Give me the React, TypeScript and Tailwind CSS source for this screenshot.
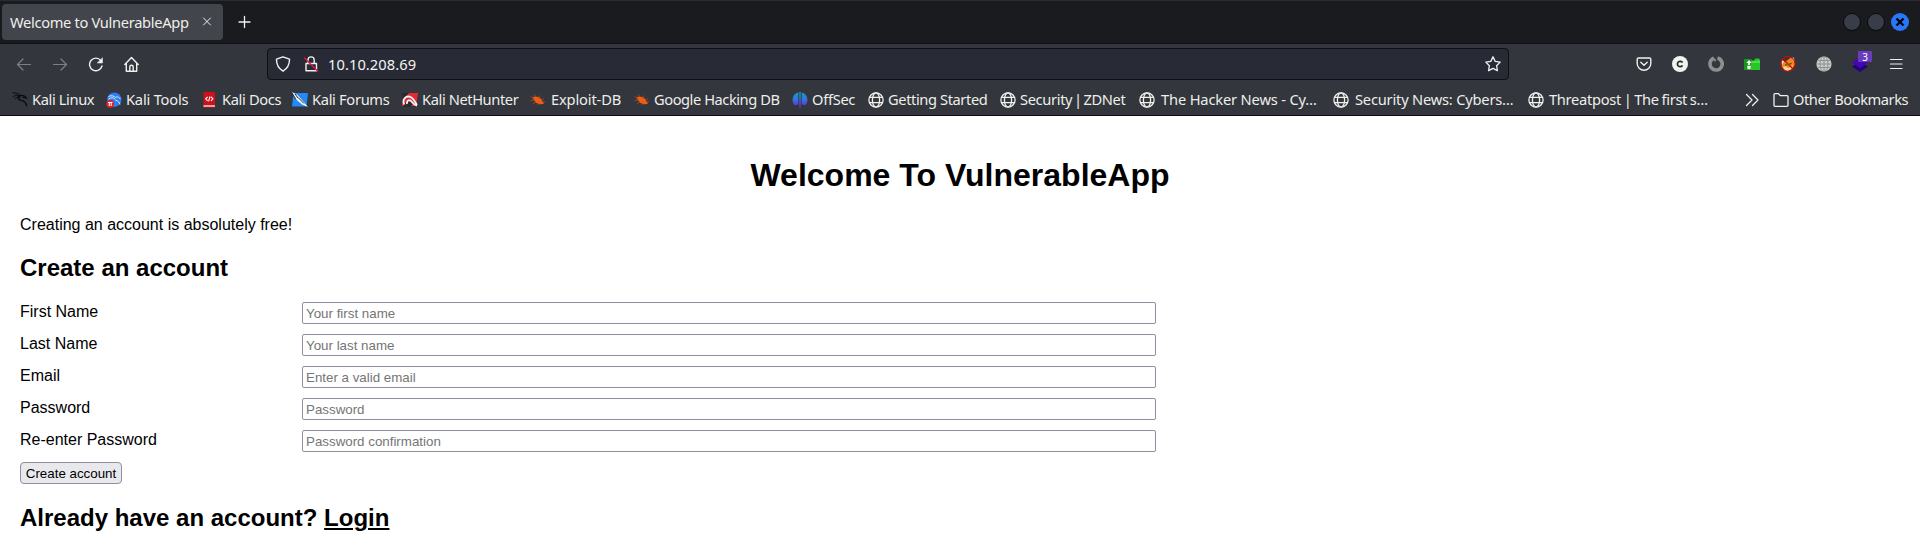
import React from "react";

type Kind =
  | "dragon" | "tools" | "docs" | "forums" | "nethunter" | "bug" | "offsec" | "globe";

const bookmarks: { label: string; kind: Kind; box: string; text: string }[] = [
  { label: "Kali Linux", kind: "dragon", box: "w-[94px]", text: "ml-1 tracking-[-0.38px]" },
  { label: "Kali Tools", kind: "tools", box: "w-[96px]", text: "ml-1 tracking-[-0.2px]" },
  { label: "Kali Docs", kind: "docs", box: "w-[90px]", text: "ml-[4px] tracking-[-0.35px]" },
  { label: "Kali Forums", kind: "forums", box: "w-[110px]", text: "ml-1 tracking-[-0.32px]" },
  { label: "Kali NetHunter", kind: "nethunter", box: "w-[128px]", text: "ml-1 tracking-[-0.4px]" },
  { label: "Exploit-DB", kind: "bug", box: "w-[104px]", text: "ml-[5px] tracking-[-0.15px]" },
  { label: "Google Hacking DB", kind: "bug", box: "w-[158px]", text: "ml-1 tracking-[-0.45px]" },
  { label: "OffSec", kind: "offsec", box: "w-[76px]", text: "ml-1 tracking-[-0.3px]" },
  { label: "Getting Started", kind: "globe", box: "w-[132px]", text: "ml-1 tracking-[-0.4px]" },
  { label: "Security | ZDNet", kind: "globe", box: "w-[139px]", text: "ml-1 tracking-[-0.35px] [word-spacing:-1.7px]" },
  { label: "The Hacker News - Cy…", kind: "globe", box: "w-[194px]", text: "ml-[6px] tracking-[-0.16px]" },
  { label: "Security News: Cybers…", kind: "globe", box: "w-[195px]", text: "ml-[6px] tracking-[-0.2px]" },
  { label: "Threatpost | The first s…", kind: "globe", box: "w-[200px]", text: "ml-[5px] tracking-[-0.3px] [word-spacing:-0.8px]" },
];

function BookmarkIcon({ kind }: { kind: Kind }) {
  const p = { width: 16, height: 16, viewBox: "0 0 16 16", fill: "none", className: "shrink-0" };
  switch (kind) {
    case "dragon":
      return (
        <svg {...p} stroke="#08090b" strokeLinecap="round">
          <path d="M.8 .8C4 .8 6 1.600 8 3.200M1.200 4.600C3 3.200 6 3 8 4M3 6.600C4.500 5.200 6.500 4.600 8 4.800" strokeWidth=".9" />
          <path d="M8 3.600C5.500 5.500 6 8 9 8.400C12 8.800 14.200 10.500 14.500 13.800" strokeWidth="1.400" />
          <path d="M8.500 3.500C11 3 13 3.800 14.500 6L11 5.400" strokeWidth="1.200" />
        </svg>
      );
    case "tools":
      return (
        <svg {...p}>
          <circle cx="8.300" cy="7.700" r="7.200" fill="#2d7ff0" />
          <path d="M2.500 4.500C6 3 8 4 9.500 5.500M2.500 7C5 5.500 7 5.500 8.500 6.500C9 9 13 8 14 12.500M9.500 5.200C12 4.500 13.500 5.500 14.300 7" stroke="#dceaff" strokeWidth="1" />
          <circle cx="4.200" cy="11.800" r="3.900" fill="#e0242c" />
          <path d="M2 10.500h4.400M3.300 10.500v3.500M5.200 10.500v3.500" stroke="#fff" strokeWidth="1" />
        </svg>
      );
    case "docs":
      return (
        <svg {...p}>
          <path d="M2 0h11v13.500H1.500V1z" fill="#d01018" />
          <path d="M1.500 13.300H13V15.500H2.500q-1 0-1-1z" fill="#efd9d9" />
          <path d="M1.500 14.700H13V16H2.500q-1 0-1-1z" fill="#a8141a" />
          <path d="M5.600 4.800L3.700 6.800l1.900 2M9 4.800l1.900 2-1.900 2M8 4.300L6.600 9.300" stroke="#fff" strokeWidth="1.100" />
        </svg>
      );
    case "forums":
      return (
        <svg {...p}>
          <path d="M1.500 1H16l-1.500 13.500H0z" fill="#2389f5" />
          <path d="M0 0L5.500 3l5 5.500L16 15l-6-2.500L3.500 7z" fill="#f4f4f1" />
          <path d="M0 1l4 6.500M3 2l3 4M6 5.500l6 6" stroke="#252b35" strokeWidth="1" />
        </svg>
      );
    case "nethunter":
      return (
        <svg {...p}>
          <path d="M2 1h14l-1.800 13H0z" fill="#e32b35" />
          <path d="M0 1h7L1 8zM3 11l4-4 4 5-3 3H1z" fill="#272a31" />
          <path d="M2.200 12.500C-.2 7 4 3.200 8.500 5c3 1.200 4.500 5 6.500 8M5 12c-.5-3.500 2.500-5 4.500-2.500 1.500 2 2.500 3.500 5.500 4" stroke="#f5f2f2" strokeWidth="1.800" />
        </svg>
      );
    case "bug":
      return (
        <svg {...p}>
          <path d="M2.500 5.500C5 3.500 8 4.500 10.500 6.500l3.500 5c-3 1.500-7 .5-9-2z" fill="#ef5c10" />
          <path d="M3 6L.5 4.500M6 5L4 2.500M9 6l1-2.500M11 7.500l3-.5M4 8L.5 8.500M6 10l-3 1.500M9 11l-1 2M13 10l2-.5" stroke="#b9531f" strokeWidth=".7" />
        </svg>
      );
    case "offsec":
      return (
        <svg {...p}>
          <defs>
            <linearGradient id="offsec" x1="0" y1="0" x2="0" y2="1">
              <stop stopColor="#09a6c4" />
              <stop offset=".5" stopColor="#3a6edc" />
              <stop offset="1" stopColor="#6a22dc" />
            </linearGradient>
          </defs>
          <path d="M6.300.4v12.200C4.500 12.700 3.400 13.300 2.500 13.300C-.8 9 0 2 6.300.4zM7.300 0h1.400v16H7.300zM9.700.4C16 2 16.800 9 13.500 13.300C12.600 13.300 11.500 12.700 9.700 12.600z" fill="url(#offsec)" />
        </svg>
      );
    default:
      return (
        <svg {...p} stroke="#f0f0ec" strokeWidth="1.300">
          <circle cx="8" cy="8" r="7.100" />
          <ellipse cx="8" cy="8" rx="3.600" ry="7.100" />
          <path d="M1.500 5.400h13M1.500 10.600h13" />
        </svg>
      );
  }
}

const fields = [
  ["First Name", "Your first name", "text"],
  ["Last Name", "Your last name", "text"],
  ["Email", "Enter a valid email", "text"],
  ["Password", "Password", "password"],
  ["Re-enter Password", "Password confirmation", "password"],
];

const icon = {
  width: 16,
  height: 16,
  viewBox: "0 0 16 16",
  fill: "none",
  stroke: "#f0f0ee",
  strokeWidth: 1.2,
  strokeLinecap: "round" as const,
  strokeLinejoin: "round" as const,
  className: "shrink-0",
};

function TabBar() {
  return (
    <div className="flex h-11 items-start justify-between border-b border-[#101114] border-t border-t-[#2b2c31] bg-[#1a1b1f] pl-[2px]">
      <div className="flex items-center pt-[3px]">
        <div className="flex h-9 w-[221px] items-center rounded-[4px] bg-[#42454c] pl-2 text-[14.67px] text-[#eeeeea]">
          <span className="w-[189px] whitespace-nowrap tracking-[-0.32px]">Welcome to VulnerableApp</span>
          <svg {...icon} strokeWidth="1"><path d="M4.500 4l7 7M11.500 4l-7 7" /></svg>
        </div>
        <svg {...icon} className="ml-[14px] shrink-0" strokeWidth="1.300"><path d="M7.500 2.500v11M2 8h11" /></svg>
      </div>
      <div className="flex gap-[6px] pr-[11px] pt-3">
        <span className="size-[18px] rounded-full border border-[#08090b] bg-[#383d49]" />
        <span className="size-[18px] rounded-full border border-[#08090b] bg-[#383d49]" />
        <svg width="18" height="18" viewBox="0 0 18 18"><circle cx="9" cy="9" r="9" fill="#2a76f8" /><path d="M5.500 5.500l7 7M12.500 5.500l-7 7" stroke="#07080c" strokeWidth="2.400" /></svg>
      </div>
    </div>
  );
}

function Toolbar() {
  return (
    <div className="flex h-[40px] items-center">
      <div className="flex w-[267px] items-center gap-5 pl-4">
        <svg {...icon} stroke="#7e8085"><path d="M14.500 8.500H1.500M7 3L1.500 8.500 7 14" /></svg>
        <svg {...icon} stroke="#7e8085"><path d="M1.500 8.500h13M9 3L14.500 8.500 9 14" /></svg>
        <svg {...icon} strokeWidth="1.400"><path d="M14 10A6.300 6.300 0 1 1 12.800 4.500" /><path d="M14.500 2v5h-5z" fill="#f0f0ee" strokeWidth=".5" /></svg>
        <svg {...icon} strokeWidth="1.400"><path d="M.8 8.400L7.500 1.500 14.200 8.400M2.300 7.300v7.900h10.400V7.300M5.800 15V11q0-1.700 1.700-1.700T9.200 11v4" /></svg>
      </div>
      <div className="flex h-8 w-[1242px] items-center rounded-[4px] border border-[#0e0f12] bg-[#282a36] px-[7px]">
        <svg {...icon} strokeWidth="1.400"><path d="M8 .8L14.500 3.200C14.600 9 12.500 12.500 8 15.200C3.500 12.500 1.400 9 1.500 3.200z" /></svg>
        <svg {...icon} className="ml-3 shrink-0" strokeWidth="1.400"><path d="M3 7.500h10.500v7.300H3zM5 7.300V4a3.100 3.100 0 0 1 6.200 0v3.300" /><path d="M1.500 2L14.500 15" stroke="#e2144b" strokeWidth="1.300" /></svg>
        <span className="ml-[9px] grow text-[14.67px] tracking-[0.08px] text-[#f4f4f2]">10.10.208.69</span>
        <svg {...icon} strokeWidth="1.300"><path d="M8 .8l2.200 4.600 5 .7-3.600 3.600.8 5L8 12.400 3.600 14.700l.8-5L.8 6.100l5-.7z" /></svg>
      </div>
      <div className="ml-[127px] flex items-center gap-5">
        <svg {...icon} strokeWidth="1.400"><path d="M2.500 2h11q1.300 0 1.300 1.300v4.200a6.800 6.800 0 0 1-13.600 0V3.300Q1.200 2 2.500 2zM4.800 6.300L8 9.300l3.200-3" /></svg>
        <svg width="16" height="16" viewBox="0 0 16 16"><circle cx="8" cy="8" r="8" fill="#f2f2ef" /><path d="M10.500 6.700A2.700 2.700 0 1 0 10.500 9.300" fill="none" stroke="#282a2f" strokeWidth="1.700" /></svg>
        <svg width="16" height="16" viewBox="0 0 16 16" fill="none" stroke="#8f8f8f" strokeWidth="3.600"><path d="M9.500 2A6.100 6.100 0 1 1 5.500 2.400" /><path d="M4 1L7 3.500V5.500" strokeWidth="1.500" /></svg>
        <svg width="16" height="16" viewBox="0 0 16 16">
          <path d="M0 3h7.500v11H0z" fill="#17961c" />
          <path d="M7 4.500h3L11.500 2.500H15L16 4v10H7z" fill="#27c72a" />
          <path d="M8 5h8v2H8z" fill="#4be04a" />
          <path d="M5 4L2.300 7h1.800v2h1.800V7h1.800zM3.200 9.800h3.600L6.500 13.200h-3z" fill="#fff" />
        </svg>
        <svg width="16" height="16" viewBox="0 0 16 16" fill="none">
          <path d="M1.500 10L3 5l2 1 6-4.500 1 2L15 4l-.5 5-2.500 4-4 2H5z" fill="#ed8a16" />
          <path d="M1 4l3 1-2 4zM11 2l3-.5.5 4z" fill="#f3efe9" />
          <path d="M3 11l3-1 2 2 3-1 2.500-2.500-2 4.500-4 2H5z" fill="#f5d7a2" />
          <path d="M5 9h2M9.500 8l2-.5" stroke="#302c2a" strokeWidth="1.200" />
          <circle cx="8" cy="8" r="7.300" stroke="#bd0f0c" strokeWidth="1.200" />
          <path d="M3 3l10 10" stroke="#bd0f0c" strokeWidth="1.200" />
        </svg>
        <svg width="16" height="16" viewBox="0 0 16 16" fill="none"><circle cx="8" cy="8" r="7.600" fill="#cacaca" /><path d="M.5 8h15M2 4.500h12M2 11.500h12M8 .5v15" stroke="#85878a" strokeWidth=".8" /><ellipse cx="8" cy="8" rx="4" ry="7.500" stroke="#85878a" strokeWidth=".8" /></svg>
        <div className="relative size-4">
          <svg width="16" height="16" viewBox="0 0 16 16"><path d="M0 10.500L8 6l8 4.500L8 16z" fill="#250080" /><path d="M0 6.500L8 1l8 5.500L8 12z" fill="#4508ae" /></svg>
          <span className="absolute -top-[5px] left-[6px] flex h-[11px] w-[14px] items-center justify-center rounded-[1px] bg-[#6b3bbd] text-[10px] leading-none text-white">3</span>
        </div>
        <svg {...icon} strokeWidth="1.200"><path d="M2.500 3.500h11.500M2.500 8h11.500M2.500 12.500h11.500" /></svg>
      </div>
    </div>
  );
}

function BookmarksBar() {
  return (
    <div className="flex h-8 items-center whitespace-nowrap border-b border-[#0b0b0e] pl-3 text-[14.67px] text-[#eeeeea]">
      {bookmarks.map((b) => (
        <div key={b.label} className={`flex shrink-0 items-center ${b.box}`}>
          <BookmarkIcon kind={b.kind} />
          <span className={`pb-[2px] ${b.text}`}>{b.label}</span>
        </div>
      ))}
      <svg {...icon} className="ml-[16px] shrink-0" strokeWidth="1.300"><path d="M2.500 2.500L8 8l-5.500 5.500M8.500 2.500L14 8l-5.500 5.500" /></svg>
      <svg {...icon} className="ml-[13px] shrink-0" strokeWidth="1.300"><path d="M1 2.700q0-1 1-1h3.500l2 2H14q1 0 1 1v8.600q0 1-1 1H2q-1 0-1-1z" /></svg>
      <span className="ml-1 pb-[2px] tracking-[-0.45px]">Other Bookmarks</span>
    </div>
  );
}

export default function App() {
  return (
    <div className="h-[546px] w-[1920px] overflow-hidden bg-white font-['Liberation_Sans',sans-serif] text-black">
      <header className="h-[116px] bg-[#33363d] font-['Noto_Sans',sans-serif]">
        <TabBar />
        <Toolbar />
        <BookmarksBar />
      </header>
      <main className="px-5 pt-[41px]">
        <h1 className="text-center text-[32px] font-bold leading-9">Welcome To VulnerableApp</h1>
        <p className="mt-[23px] text-base leading-[18px]">Creating an account is absolutely free!</p>
        <h2 className="mt-5 text-2xl font-bold leading-7">Create an account</h2>
        <form className="mt-5 flex flex-col items-start gap-[10px]">
          {fields.map(([label, placeholder, type]) => (
            <label key={label} className="flex h-[22px] items-start">
              <span className="w-[282px] text-base leading-5">{label}</span>
              <input type={type} placeholder={placeholder} className="h-[22px] w-[854px] rounded-[2px] border border-[#8f8f9d] bg-white px-[3px] text-[13.333px] leading-4 placeholder:text-[#757575]" />
            </label>
          ))}
          <button type="button" className="h-[22px] w-[102px] whitespace-nowrap rounded-[4px] border border-[#8f8f9d] bg-[#e9e9ed] pt-px text-center text-[13.333px] leading-5">Create account</button>
        </form>
        <h2 className="mt-5 text-2xl font-bold leading-7">
          Already have an account? <a className="underline" href="#login">Login</a>
        </h2>
      </main>
    </div>
  );
}
